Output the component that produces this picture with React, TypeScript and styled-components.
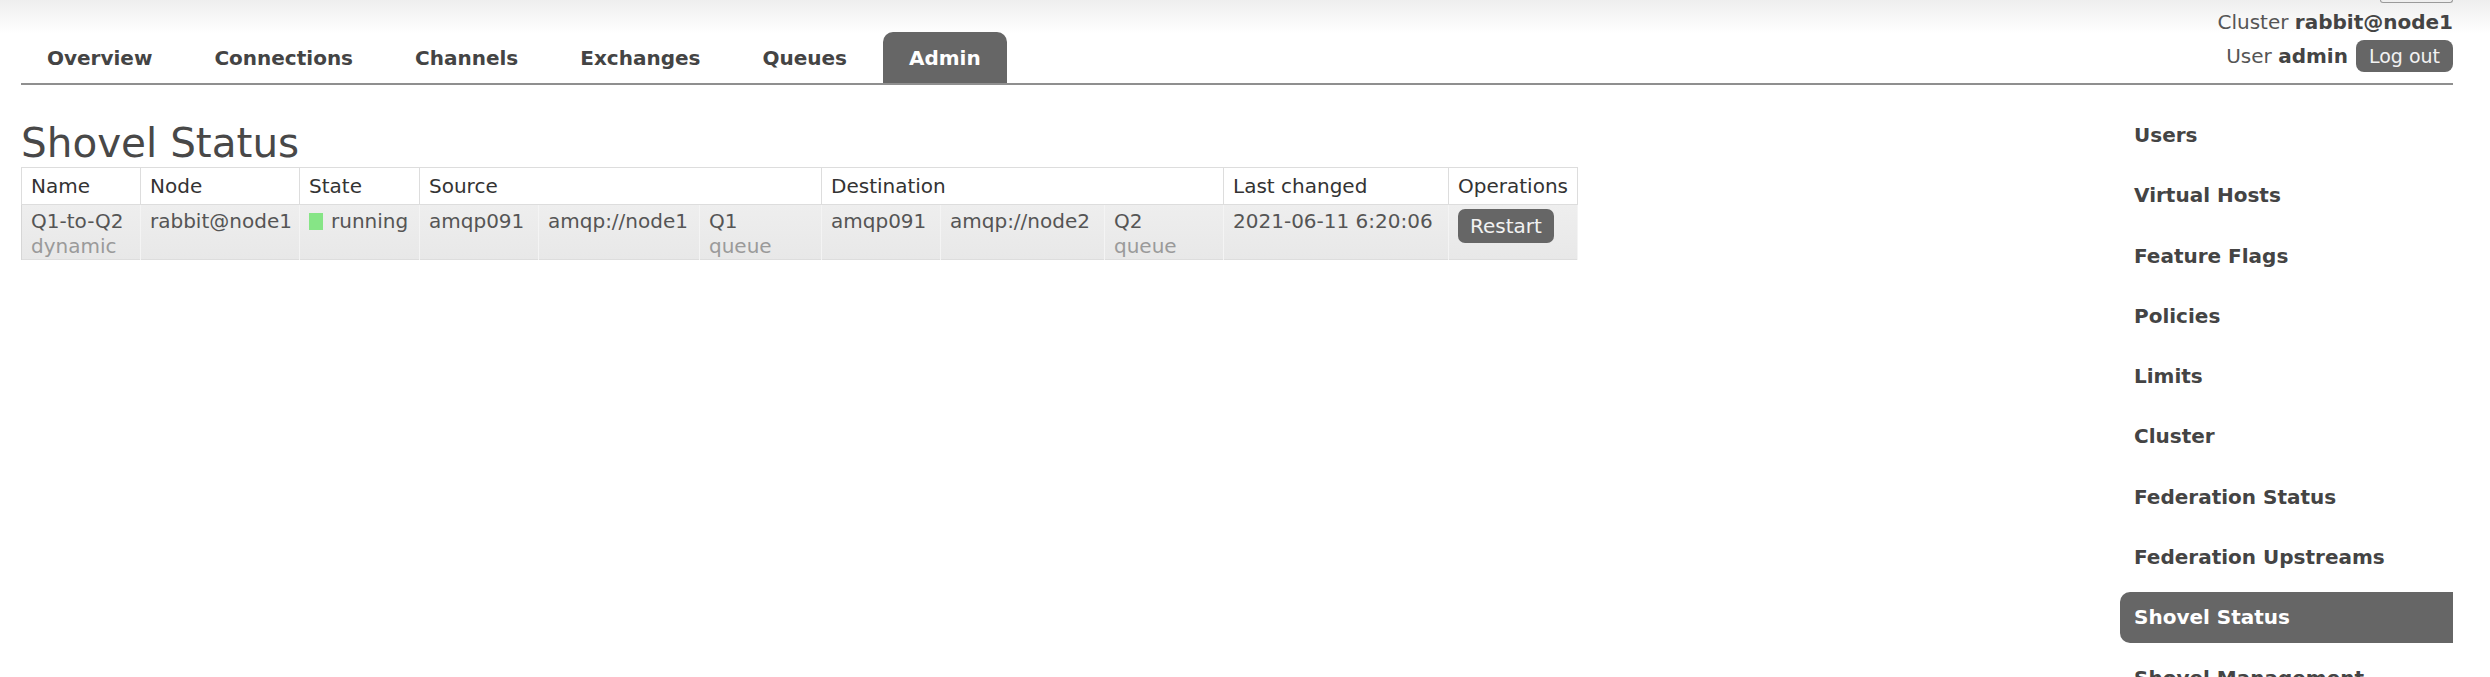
import React from 'react';
import styled, { createGlobalStyle } from 'styled-components';

const GlobalStyle = createGlobalStyle`
  html, body { margin: 0; padding: 0; background: #fff; }
  body {
    font-family: "DejaVu Sans", Verdana, sans-serif;
    color: #484848;
    overflow: hidden;
  }
  * { box-sizing: border-box; }
`;

const Page = styled.div`
  width: 2490px;
  height: 677px;
  overflow: hidden;
  padding: 0 37px 0 21px;
  background: linear-gradient(#eeeeee 0px, #ffffff 34px);
`;

const Header = styled.header`
  display: flex;
  justify-content: space-between;
  align-items: stretch;
  height: 85px;
  border-bottom: 2px solid #8f8f8f;
`;

const Tabs = styled.nav`
  display: flex;
  align-items: flex-end;
  gap: 10px;
`;

const Tab = styled.a<{ $active?: boolean }>`
  display: flex;
  align-items: center;
  height: 51px;
  padding: 0 26px;
  font-size: 20px;
  font-weight: bold;
  color: ${(p) => (p.$active ? '#ffffff' : '#444444')};
  background: ${(p) => (p.$active ? '#666666' : 'transparent')};
  border-radius: 10px 10px 0 0;
  text-decoration: none;
`;

const Login = styled.div`
  display: flex;
  flex-direction: column;
  align-items: flex-end;
  font-size: 20px;
  color: #555555;
`;

const ClippedBox = styled.div`
  width: 73px;
  height: 3px;
  border: 1px solid #9a9a9a;
  border-top: none;
  border-radius: 0 0 4px 4px;
  margin-bottom: 7px;
`;

const InfoLine = styled.div`
  display: flex;
  align-items: center;
  height: 24px;
  line-height: 24px;
  white-space: pre;
`;

const UserLine = styled(InfoLine)`
  height: 32px;
  margin-top: 6px;
`;

const Strong = styled.b`
  color: #444444;
`;

const DarkButton = styled.button`
  border: none;
  background: #666666;
  color: #f2f2f2;
  font-family: "DejaVu Sans", Verdana, sans-serif;
  cursor: pointer;
`;

const LogoutButton = styled(DarkButton)`
  height: 32px;
  margin-left: 8px;
  padding: 0 13px;
  border-radius: 8px;
  font-size: 19px;
`;

const Main = styled.div`
  display: flex;
  justify-content: space-between;
  align-items: flex-start;
`;

const Content = styled.section`
  display: flex;
  flex-direction: column;
`;

const Title = styled.h1`
  margin: 34px 0 0 0;
  height: 48px;
  font-size: 40.5px;
  line-height: 48px;
  font-weight: normal;
  color: #484848;
`;

const Table = styled.table`
  width: 1556px;
  table-layout: fixed;
  border-collapse: collapse;
  font-size: 20px;
  border: 1px solid #dddddd;
`;

const HeadCell = styled.th`
  height: 37px;
  padding: 0 9px;
  text-align: left;
  font-weight: normal;
  color: #333333;
  background: #ffffff;
  border: 1px solid #dddddd;
  white-space: nowrap;
`;

const BodyRow = styled.tr`
  background: linear-gradient(#eeeeee, #e8e8e8);
`;

const Cell = styled.td`
  height: 54px;
  padding: 4px 9px 0 9px;
  vertical-align: top;
  line-height: 25px;
  color: #555555;
  border-left: 1px solid #d6d6d6;
  border-right: 1px solid #f4f4f4;
  white-space: nowrap;
`;

const Sub = styled.div`
  color: #9a9a9a;
`;

const StateDot = styled.span`
  display: inline-block;
  width: 14px;
  height: 17px;
  margin-right: 8px;
  vertical-align: -2px;
  background: #86e586;
`;

const RestartButton = styled(DarkButton)`
  height: 34px;
  padding: 0 12px;
  border-radius: 7px;
  font-size: 20px;
`;

const Sidebar = styled.ul`
  list-style: none;
  margin: 24.5px 0 0 0;
  padding: 0;
  width: 333px;
  display: flex;
  flex-direction: column;
  gap: 9.3px;
`;

const SideLink = styled.a<{ $active?: boolean }>`
  display: flex;
  align-items: center;
  height: 51px;
  padding-left: 14px;
  font-size: 20px;
  font-weight: bold;
  text-decoration: none;
  color: ${(p) => (p.$active ? '#ffffff' : '#444444')};
  background: ${(p) => (p.$active ? '#666666' : 'transparent')};
  border-radius: 10px 0 0 10px;
`;

const tabs = ['Overview', 'Connections', 'Channels', 'Exchanges', 'Queues', 'Admin'];
const sideItems = [
  'Users',
  'Virtual Hosts',
  'Feature Flags',
  'Policies',
  'Limits',
  'Cluster',
  'Federation Status',
  'Federation Upstreams',
  'Shovel Status',
  'Shovel Management',
];
const colWidths = [119, 159, 120, 119, 161, 122, 119, 164, 119, 225, 129];

export default function App() {
  return (
    <>
      <GlobalStyle />
      <Page>
        <Header>
          <Tabs>
            {tabs.map((t) => (
              <Tab key={t} $active={t === 'Admin'}>
                {t}
              </Tab>
            ))}
          </Tabs>
          <Login>
            <ClippedBox />
            <InfoLine>
              Cluster <Strong>rabbit@node1</Strong>
            </InfoLine>
            <UserLine>
              User <Strong>admin</Strong>
              <LogoutButton>Log out</LogoutButton>
            </UserLine>
          </Login>
        </Header>
        <Main>
          <Content>
            <Title>Shovel Status</Title>
            <Table>
              <colgroup>
                {colWidths.map((w, i) => (
                  <col key={i} style={{ width: w }} />
                ))}
              </colgroup>
              <thead>
                <tr>
                  <HeadCell>Name</HeadCell>
                  <HeadCell>Node</HeadCell>
                  <HeadCell>State</HeadCell>
                  <HeadCell colSpan={3}>Source</HeadCell>
                  <HeadCell colSpan={3}>Destination</HeadCell>
                  <HeadCell>Last changed</HeadCell>
                  <HeadCell>Operations</HeadCell>
                </tr>
              </thead>
              <tbody>
                <BodyRow>
                  <Cell>
                    Q1-to-Q2
                    <Sub>dynamic</Sub>
                  </Cell>
                  <Cell>rabbit@node1</Cell>
                  <Cell>
                    <StateDot />
                    running
                  </Cell>
                  <Cell>amqp091</Cell>
                  <Cell>amqp://node1</Cell>
                  <Cell>
                    Q1
                    <Sub>queue</Sub>
                  </Cell>
                  <Cell>amqp091</Cell>
                  <Cell>amqp://node2</Cell>
                  <Cell>
                    Q2
                    <Sub>queue</Sub>
                  </Cell>
                  <Cell>2021-06-11 6:20:06</Cell>
                  <Cell>
                    <RestartButton>Restart</RestartButton>
                  </Cell>
                </BodyRow>
              </tbody>
            </Table>
          </Content>
          <Sidebar>
            {sideItems.map((s) => (
              <li key={s}>
                <SideLink $active={s === 'Shovel Status'}>{s}</SideLink>
              </li>
            ))}
          </Sidebar>
        </Main>
      </Page>
    </>
  );
}
